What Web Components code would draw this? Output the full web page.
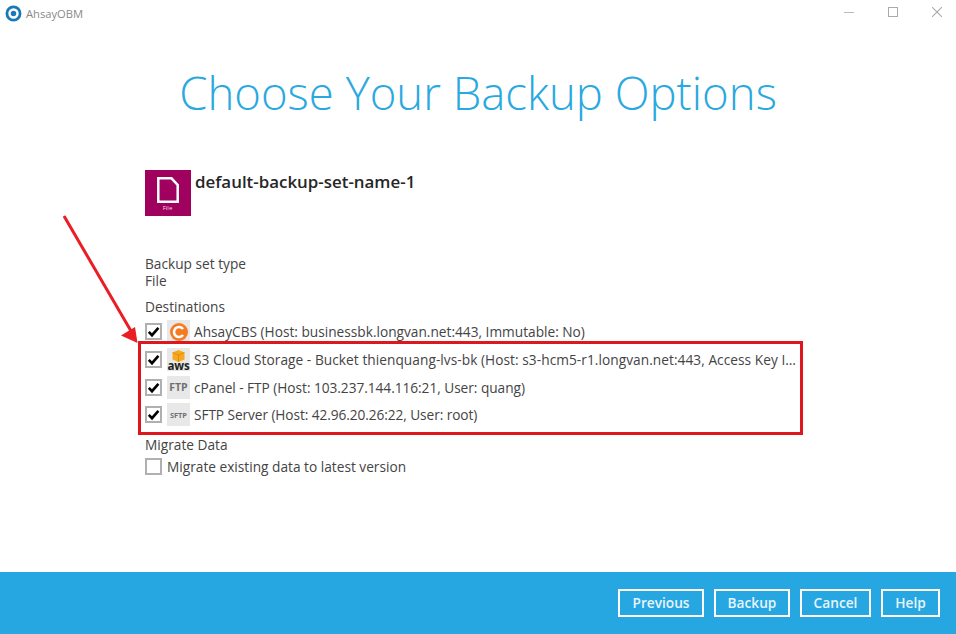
<!DOCTYPE html>
<html><head><meta charset="utf-8">
<style>
html,body{margin:0;padding:0;background:#fff}
body{width:956px;height:634px;overflow:hidden;font-family:"Open Sans",sans-serif;color:#444;position:relative}
</style></head><body>
<template id="t-bar"><style>
:host{display:flex;height:24px;align-items:center;justify-content:space-between;padding:0 14px 0 5px}
.l{display:flex;align-items:center;gap:4px;font-size:11.200px;color:#8a8a8a;margin-top:2px}
.r{display:flex;align-items:center;gap:34px}
svg{display:block}
</style><div class="l"><svg width="17" height="17" viewBox="0 0 16 16"><circle cx="8" cy="8" r="6.200" fill="none" stroke="#1a78b8" stroke-width="2.600"/><circle cx="8" cy="8" r="2.600" fill="#1a78b8"/></svg><span>AhsayOBM</span></div>
<div class="r"><svg width="10" height="10" viewBox="0 0 10 10"><path d="M0 5.500h10" stroke="#bbb"/></svg><svg width="10" height="10" viewBox="0 0 10 10"><rect x=".5" y=".5" width="9" height="9" fill="none" stroke="#aaa"/></svg><svg width="10" height="10" viewBox="0 0 10 10"><path d="M0 0l10 10M10 0L0 10" stroke="#aaa" stroke-width="1.100"/></svg></div></template>

<template id="t-title"><style>
:host{display:block;text-align:center;font-weight:300;font-size:45.500px;line-height:62px;color:#2aa8e0;padding-top:37px}
</style><slot></slot></template>

<template id="t-head"><style>
:host{display:flex;gap:4.500px;align-items:flex-start;height:46px;margin-left:-.5px}
.tile{width:46px;height:46px;background:#a0005e;display:flex;flex-direction:column;align-items:center;justify-content:flex-start;color:#fff}
.tile svg{margin-top:7px;display:block}
.tile span{font-size:6px;line-height:6px;margin-top:2px;color:#f3d9e8}
.name{font-size:16.900px;font-weight:600;color:#262626;line-height:22px;margin-top:1px}
</style><div class="tile"><svg width="22" height="26" viewBox="0 0 22 26"><path d="M1.300 1.300H14.500L20.700 8V24.700H1.300Z" fill="none" stroke="#fff" stroke-width="2.500"/></svg><span>File</span></div><div class="name"><slot></slot></div></template>

<template id="t-check"><style>
:host{display:block;width:17px;height:17px;flex:none}
svg{display:block}
</style><svg width="17" height="17" viewBox="0 0 17 17"><rect x="1" y="1" width="15" height="15" fill="#fff" stroke="#b0b0b0" stroke-width="2"/><path class="m" d="M3.800 8.800l3.200 3.400L13.400 4.800" fill="none" stroke="#000" stroke-width="2.600"/></svg></template>

<template id="t-row"><style>
:host{display:flex;align-items:center;height:27.700px;font-size:13.700px;color:#444;white-space:nowrap}
.ic{width:23px;height:23px;margin-left:5px;margin-right:4px;background:#e8e8e8;display:flex;align-items:center;justify-content:center;flex:none}
.t{width:604px;overflow:hidden;text-overflow:ellipsis}
</style><ahsay-check></ahsay-check><div class="ic"><slot name="icon"></slot></div><div class="t"><slot></slot></div></template>

<template id="t-main"><style>
:host{display:block;padding:47px 0 0 145px;box-sizing:border-box;width:956px}
.lbl{font-size:13.700px;line-height:17px}
.info{margin-top:39px}
.dest{margin-top:9px}
.rows{margin-top:3px}
.mig{margin-top:7px}
.mrow{display:flex;align-items:center;gap:5px;font-size:13.700px;height:22px;margin-top:3px}
</style>
<ahsay-head>default-backup-set-name-1</ahsay-head>
<div class="lbl info">Backup set type<br>File</div>
<div class="lbl dest">Destinations</div>
<div class="rows"><slot></slot></div>
<div class="lbl mig">Migrate Data</div>
<div class="mrow"><ahsay-check off></ahsay-check><span>Migrate existing data to latest version</span></div>
</template>

<template id="t-foot"><style>
:host{position:absolute;left:0;right:0;bottom:0;height:62px;background:#26a7e2;display:flex;align-items:center;justify-content:flex-end;gap:10px;padding-right:16px;box-sizing:border-box}
</style><slot></slot></template>

<template id="t-btn"><style>
:host{display:block;height:28px;box-sizing:border-box;border:2px solid #fff;color:#e6f5fc;font-size:13.700px;font-weight:600;line-height:24px;text-align:center}
</style><slot></slot></template>

<template id="t-note"><style>
:host{position:absolute;left:0;top:0;width:956px;height:634px;pointer-events:none;display:block}
.box{position:absolute;left:138px;top:341px;width:665px;height:94px;box-sizing:border-box;border:3px solid #e0161e}
svg{position:absolute;left:0;top:0}
</style><div class="box"></div><svg width="956" height="634"><path d="M64 216L131 331" stroke="#ea1c24" stroke-width="3" fill="none"/><path d="M137.500 343L121 335.500L135 327Z" fill="#ea1c24"/></svg></template>

<ahsay-bar></ahsay-bar>
<ahsay-title>Choose Your Backup Options</ahsay-title>
<ahsay-main>
<ahsay-row><svg slot="icon" width="20" height="20" viewBox="0 0 20 20"><circle cx="10" cy="10" r="9" fill="#f47b20"/><path d="M14 7a5 5 0 1 0 0 6" fill="none" stroke="#fff" stroke-width="2.600"/></svg>AhsayCBS (Host: businessbk.longvan.net:443, Immutable: No)</ahsay-row>
<ahsay-row style="letter-spacing:.05px"><span slot="icon" style="display:flex;flex-direction:column;align-items:center"><svg width="13" height="12" viewBox="0 0 13 12" style="display:block"><path d="M6.500 0l6 2.500v7L6.500 12 .5 9.500v-7z" fill="#f7a81b"/><path d="M.5 2.500L6.500 5l6-2.500M6.500 5v7" stroke="#c9820f" fill="none" stroke-width=".6"/></svg><span style="font:700 11.500px/8px 'Open Sans',sans-serif;color:#222;letter-spacing:-.2px">aws</span></span>S3 Cloud Storage - Bucket thienquang-lvs-bk (Host: s3-hcm5-r1.longvan.net:443, Access Key ID: AKIAIOSFODNN7)</ahsay-row>
<ahsay-row style="letter-spacing:-.04px"><span slot="icon" style="font:700 10.500px 'Open Sans',sans-serif;color:#707070">FTP</span>cPanel - FTP (Host: 103.237.144.116:21, User: quang)</ahsay-row>
<ahsay-row style="letter-spacing:-.08px"><span slot="icon" style="font:700 7.500px 'Open Sans',sans-serif;color:#707070">SFTP</span>SFTP Server (Host: 42.96.20.26:22, User: root)</ahsay-row>
</ahsay-main>
<ahsay-foot>
<ahsay-btn style="width:86px">Previous</ahsay-btn>
<ahsay-btn style="width:76px">Backup</ahsay-btn>
<ahsay-btn style="width:71px">Cancel</ahsay-btn>
<ahsay-btn style="width:59px">Help</ahsay-btn>
</ahsay-foot>
<ahsay-note></ahsay-note>
<script>
function def(name,tid,init){customElements.define(name,class extends HTMLElement{constructor(){super();const r=this.attachShadow({mode:'open'});r.appendChild(document.getElementById(tid).content.cloneNode(true));}connectedCallback(){init&&init(this)}})}
def('ahsay-bar','t-bar');def('ahsay-title','t-title');def('ahsay-head','t-head');
def('ahsay-check','t-check',e=>{if(e.hasAttribute('off'))e.shadowRoot.querySelector('.m').remove()});
def('ahsay-row','t-row');def('ahsay-main','t-main');def('ahsay-foot','t-foot');def('ahsay-btn','t-btn');def('ahsay-note','t-note');
</script>
</body></html>
